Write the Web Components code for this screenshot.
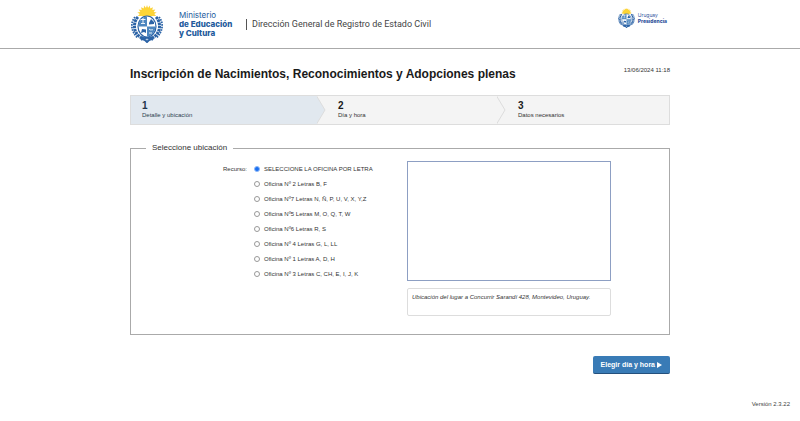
<!DOCTYPE html>
<html lang="es">
<head>
<meta charset="utf-8">
<title>Registro de Estado Civil</title>
<style>
  body {
    margin: 0;
    background: #fff;
    color: #333;
    font-family: "Liberation Sans", Arial, sans-serif;
    font-size: 6px;
    line-height: 8px;
  }
</style>
</head>
<body>
<agenda-page>
  <site-header slot="header" office="Dirección General de Registro de Estado Civil"></site-header>
  <page-title date="13/06/2024 11:18">Inscripción de Nacimientos, Reconocimientos y Adopciones plenas</page-title>
  <step-bar>
    <step-item number="1" current>Detalle y ubicación</step-item>
    <step-item number="2">Día y hora</step-item>
    <step-item number="3">Datos necesarios</step-item>
  </step-bar>
  <location-picker legend="Seleccione ubicación" label="Recurso:">
    <map-panel slot="map">Ubicación del lugar a Concurrir Sarandí 428, Montevideo, Uruguay.</map-panel>
  </location-picker>
  <next-button>Elegir día y hora</next-button>
  <span slot="version">Versión 2.3.22</span>
</agenda-page>

<script>
class AgendaPage extends HTMLElement {
  constructor() {
    super();
    this.attachShadow({ mode: "open" }).innerHTML = `
      <style>
        :host { display: block; }
        main { display: flex; flex-direction: column; max-width: 540px; margin: 0 auto; padding: 16px 12px 0; }
        footer { padding: 26px 10px 12px; text-align: right; color: #444; }
      </style>
      <slot name="header"></slot>
      <main><slot></slot></main>
      <footer><slot name="version"></slot></footer>
    `;
  }
}

class CoatOfArms extends HTMLElement {
  constructor() {
    super();
    this.attachShadow({ mode: "open" }).innerHTML = `
      <style>
        :host { display: block; }
        svg { display: block; width: 100%; height: 100%; }
      </style>
      <svg viewBox="0 0 32 38" aria-hidden="true">
        <path fill="#fbd23a" d="M16 0l1 3 2-2.400.2 3 2.700-1.400-.6 2.800 3-.6-1.600 2.500 3 .5-2.500 1.700 2 2H6.800l2-2-2.500-1.700 3-.5-1.600-2.500 3 .6-.6-2.800 2.700 1.400.2-3 2 2.400z"/>
        <circle cx="16" cy="8" r="5.500" fill="#fdd535"/>
        <g fill="none" stroke="#2b63a6">
          <path stroke-width="3" stroke-dasharray="2.600 .6" d="M7 12C2 17 2 27 9 32l6 3"/>
          <path stroke-width="3" stroke-dasharray="2.600 .6" d="M25 12c5 5 5 15-2 20l-6 3"/>
          <path stroke-width="1.800" stroke-dasharray="1.600 1" d="M4 12C-1 18 0 27 7 33"/>
          <path stroke-width="1.800" stroke-dasharray="1.600 1" d="M28 12c5 6 4 15-3 21"/>
          <path stroke-width="2" d="M10 35c4-3 8-3 12 0M11 32l5 5 5-5"/>
        </g>
        <ellipse cx="16" cy="21.500" rx="9" ry="10.500" fill="#fff" stroke="#2b63a6" stroke-width="1.200"/>
        <path fill="#4c86bf" d="M16 11.500A8.500 10 0 0 0 7.500 21.500H16zM16 21.500h8.500A8.500 10 0 0 1 16 31.500z"/>
        <path stroke="#fff" stroke-width=".9" fill="none" d="M12 13v5M9.500 14.500h5M10 18.500h4M18 24c2 2 3 0 4 1M18 28h3"/>
        <path fill="#2b63a6" d="M18 18l2-4 3 3v2l-5 .5zM10 28l1-4 4 .5V28l-2-1z"/>
      </svg>
    `;
  }
}

class SiteHeader extends HTMLElement {
  constructor() {
    super();
    this.attachShadow({ mode: "open" }).innerHTML = `
      <style>
        :host { display: block; border-bottom: 1px solid #aaa; }
        .bar { display: flex; align-items: center; max-width: 538px; height: 48px; margin: 0 auto; }
        .ministry { display: flex; align-items: center; width: 103px; color: #235a9c; font: 8px/9px Inter, sans-serif; }
        .ministry coat-of-arms { width: 32px; height: 38px; margin-right: 16px; }
        .ministry b, .presidency b { display: block; font-weight: 800; }
        .office { margin-left: 12px; padding-left: 5px; border-left: 1px solid #555; color: #444; font: 9px/11px Roboto, sans-serif; }
        .presidency { display: flex; align-items: center; align-self: flex-start; margin: 8px 2px 0 auto; color: #31549d; font: 5px/6px Inter, sans-serif; }
        .presidency coat-of-arms { width: 17px; height: 20px; margin-right: 3px; }
      </style>
      <header class="bar">
        <div class="ministry">
          <coat-of-arms></coat-of-arms>
          <div>Ministerio<b>de Educación</b><b>y Cultura</b></div>
        </div>
        <div class="office"></div>
        <div class="presidency">
          <coat-of-arms></coat-of-arms>
          <div>Uruguay<b>Presidencia</b></div>
        </div>
      </header>
    `;
    this.shadowRoot.querySelector(".office").textContent = this.getAttribute("office");
  }
}

class PageTitle extends HTMLElement {
  constructor() {
    super();
    this.attachShadow({ mode: "open" }).innerHTML = `
      <style>
        :host { display: flex; justify-content: space-between; align-items: flex-start; margin-bottom: 12px; }
        h1 { margin: 0; color: #1a1a1a; font-size: 12px; line-height: 18px; }
        time { margin-top: 1px; }
      </style>
      <h1><slot></slot></h1>
      <time></time>
    `;
    this.shadowRoot.querySelector("time").textContent = this.getAttribute("date");
  }
}

class StepBar extends HTMLElement {
  constructor() {
    super();
    this.attachShadow({ mode: "open" }).innerHTML = `
      <style>
        :host { display: grid; grid-template-columns: 186fr 180fr 172fr; height: 28px; margin-bottom: 18px; border: 1px solid #ddd; background: #f4f4f4; }
      </style>
      <slot></slot>
    `;
  }
}

class StepItem extends HTMLElement {
  constructor() {
    super();
    this.attachShadow({ mode: "open" }).innerHTML = `
      <style>
        :host { display: flex; }
        :host([current]) { background: #e1e8ef; color: #2c3e50; }
        svg { width: 9px; height: 28px; }
        .text { padding: 4px 0 0 12px; }
        :host([current]) .text { padding-left: 11px; }
        :host([current]) svg { display: none; }
        strong { display: block; color: #1a1a1a; font-size: 10px; line-height: 11px; }
        :host([current]) strong { color: #22344a; }
        path { fill: var(--arrow-fill, #f4f4f4); stroke: #ddd; }
      </style>
      <svg viewBox="0 0 9 28" aria-hidden="true"><path d="M-1 -1L8 14L-1 29"/></svg>
      <div class="text"><strong></strong><slot></slot></div>
    `;
    this.shadowRoot.querySelector("strong").textContent = this.getAttribute("number");
    // the arrow takes the colour of the step it comes out of
    const prev = this.previousElementSibling;
    if (prev && prev.hasAttribute("current")) {
      this.style.setProperty("--arrow-fill", "#e1e8ef");
    }
  }
}

const OFFICES = [
  "SELECCIONE LA OFICINA POR LETRA",
  "Oficina Nº 2 Letras B, F",
  "Oficina Nº7 Letras N, Ñ, P, U, V, X, Y,Z",
  "Oficina Nº5 Letras M, O, Q, T, W",
  "Oficina Nº6 Letras R, S",
  "Oficina Nº 4 Letras G, L, LL",
  "Oficina Nº 1 Letras A, D, H",
  "Oficina Nº 3 Letras C, CH, E, I, J, K"
];

class LocationPicker extends HTMLElement {
  constructor() {
    super();
    const rows = OFFICES.map((name, i) => `
      <label><input type="radio" name="office" value="${i}" ${i === 0 ? "checked" : ""}>${name}</label>
    `).join("");

    this.attachShadow({ mode: "open" }).innerHTML = `
      <style>
        :host { display: block; }
        fieldset { min-width: 0; margin: 0; padding: 0 15px 18px; border: 1px solid #aaa; }
        legend { padding: 0 6px; font-size: 8px; line-height: 10px; }
        .body { display: grid; grid-template-columns: 101px 146px 204px; column-gap: 7px; padding-top: 8px; }
        .name { padding-top: 4px; text-align: right; }
        .options { display: flex; flex-direction: column; }
        label { display: flex; align-items: center; height: 15px; white-space: nowrap; }
        input { appearance: none; width: 6px; height: 6px; margin: 0 4px 0 0; border: 1px solid #999; border-radius: 50%; box-sizing: border-box; }
        input:checked { border-color: #8db8f8; background: #1a6ff0; }
      </style>
      <fieldset>
        <legend>${this.getAttribute("legend")}</legend>
        <div class="body">
          <div class="name" id="name">${this.getAttribute("label")}</div>
          <div class="options" role="radiogroup" aria-labelledby="name">${rows}</div>
          <slot name="map"></slot>
        </div>
      </fieldset>
    `;
  }
}

class MapPanel extends HTMLElement {
  constructor() {
    super();
    this.attachShadow({ mode: "open" }).innerHTML = `
      <style>
        :host { display: block; }
        .map { height: 118px; border: 1px solid #8d9fc3; }
        .address { min-height: 22px; margin-top: 7px; padding: 4px 4px 0; border: 1px solid #ddd; border-radius: 2px; font-style: italic; }
      </style>
      <div class="map"></div>
      <div class="address"><slot></slot></div>
    `;
  }
}

class NextButton extends HTMLElement {
  constructor() {
    super();
    this.attachShadow({ mode: "open" }).innerHTML = `
      <style>
        :host { display: block; margin-top: 21px; text-align: right; }
        button { display: inline-flex; align-items: center; gap: 2px; height: 18px; padding: 0 8px; border: 0; border-bottom: 1px solid #24507c; border-radius: 2px; background: #397bb6; color: #fff; font: bold 7px/8px "Liberation Sans", Arial, sans-serif; }
        svg { width: 5px; height: 6px; }
      </style>
      <button type="button"><slot></slot><svg viewBox="0 0 5 6" aria-hidden="true"><path fill="#fff" d="M0 0L5 3L0 6z"/></svg></button>
    `;
  }
}

customElements.define("agenda-page", AgendaPage);
customElements.define("coat-of-arms", CoatOfArms);
customElements.define("site-header", SiteHeader);
customElements.define("page-title", PageTitle);
customElements.define("step-bar", StepBar);
customElements.define("step-item", StepItem);
customElements.define("location-picker", LocationPicker);
customElements.define("map-panel", MapPanel);
customElements.define("next-button", NextButton);
</script>
</body>
</html>
